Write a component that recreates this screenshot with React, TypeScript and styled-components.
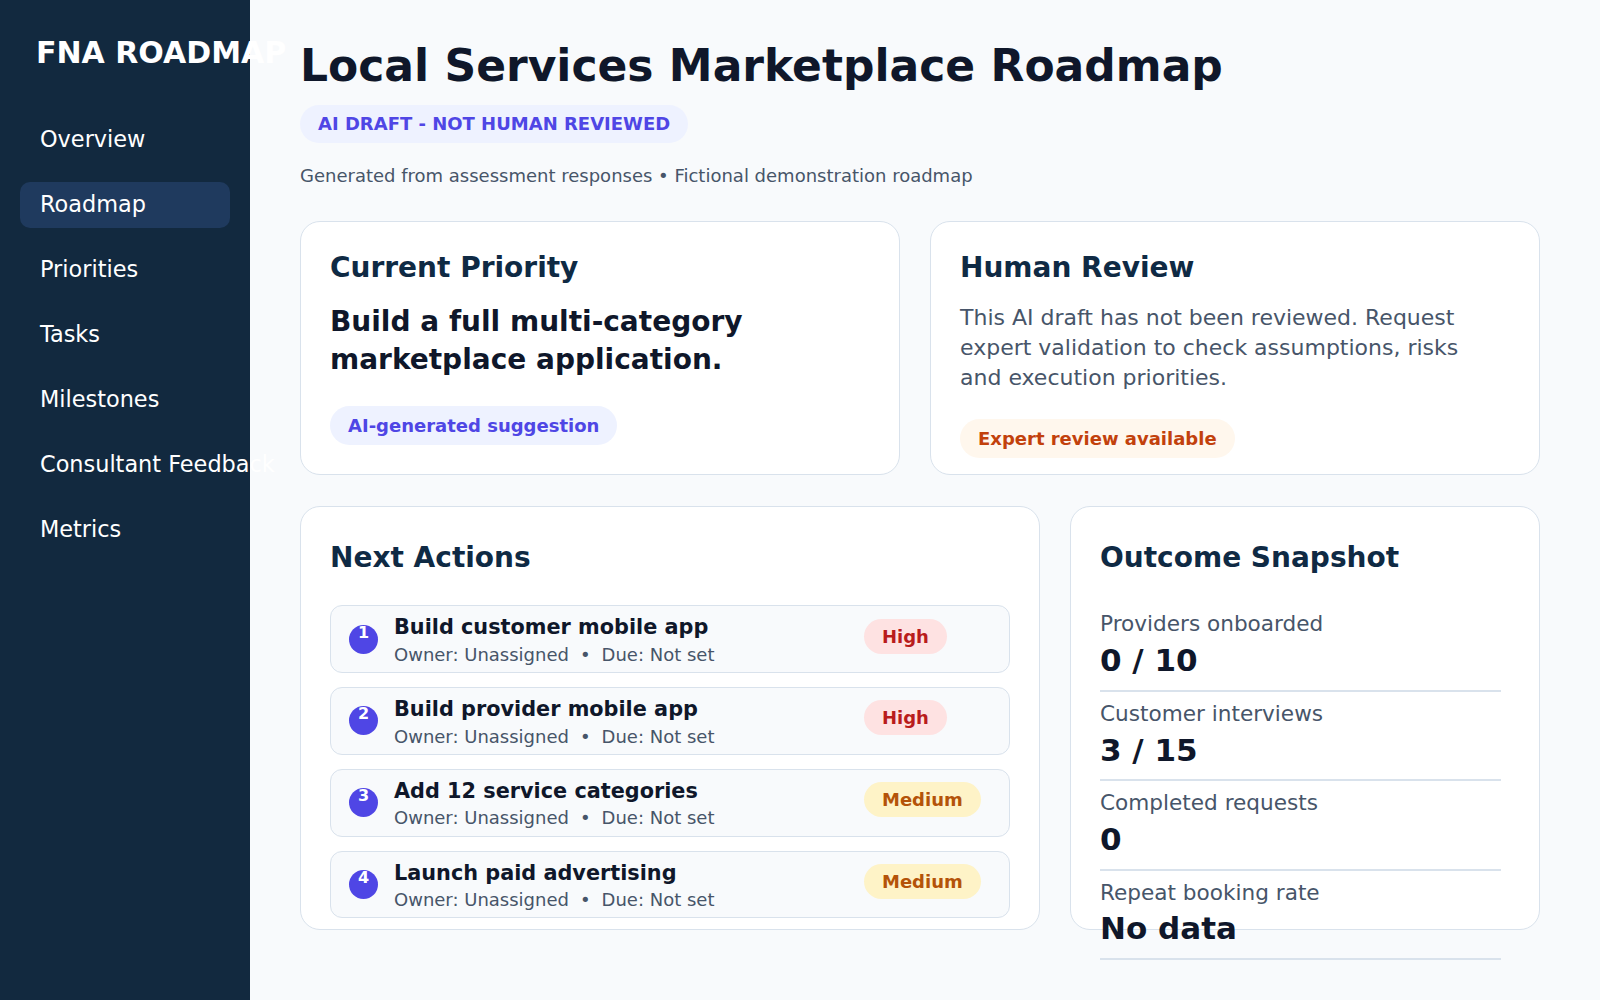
import React from "react";
import styled, { createGlobalStyle, css } from "styled-components";

const GlobalStyle = createGlobalStyle`
  html, body {
    margin: 0;
    padding: 0;
    background: #f8fafc;
    font-family: "DejaVu Sans", "Noto Sans", sans-serif;
  }
  * { box-sizing: border-box; }
`;

const Layout = styled.div`
  display: flex;
  min-height: 100vh;
`;

const Sidebar = styled.aside`
  flex: 0 0 250px;
  width: 250px;
  background: #12293f;
  padding: 35px 20px;
  display: flex;
  flex-direction: column;
`;

const Brand = styled.div`
  padding-left: 16px;
  font-size: 30px;
  font-weight: 700;
  color: #ffffff;
  white-space: nowrap;
  line-height: normal;
`;

const Nav = styled.nav`
  margin-top: 47px;
  display: flex;
  flex-direction: column;
  gap: 19px;
`;

const NavItem = styled.div<{ $active?: boolean }>`
  padding: 9px 20px 11px;
  font-size: 22.4px;
  line-height: 26px;
  color: #ffffff;
  white-space: nowrap;
  border-radius: 10px;
  ${(p) =>
    p.$active &&
    css`
      background: #1f3a5e;
    `}
`;

const Main = styled.main`
  flex: 1;
  padding: 40px 60px 40px 50px;
  display: flex;
  flex-direction: column;
`;

const Title = styled.h1`
  margin: 0;
  font-size: 44px;
  line-height: 1.2;
  font-weight: 700;
  color: #0f172a;
`;

const DraftBadge = styled.span`
  align-self: flex-start;
  margin-top: 12px;
  padding: 9px 18px;
  border-radius: 999px;
  background: #eef2ff;
  color: #4f46e5;
  font-size: 18px;
  line-height: 20px;
  font-weight: 700;
`;

const Subtitle = styled.p`
  margin: 22px 0 0;
  font-size: 18px;
  line-height: 21px;
  color: #475569;
`;

const TopGrid = styled.section`
  margin-top: 35px;
  display: grid;
  grid-template-columns: 600fr 610fr;
  gap: 30px;
`;

const BottomGrid = styled.section`
  margin-top: 31px;
  display: grid;
  grid-template-columns: 740fr 470fr;
  gap: 30px;
`;

const Card = styled.div<{ $height: number; $padTop: number }>`
  height: ${(p) => p.$height}px;
  background: #ffffff;
  border: 1px solid #d9e2ec;
  border-radius: 20px;
  padding: ${(p) => p.$padTop}px 29px 0;
  display: flex;
  flex-direction: column;
  align-items: stretch;
`;

const CardTitle = styled.h2<{ $gap: number }>`
  margin: 0 0 ${(p) => p.$gap}px;
  font-size: 28px;
  line-height: 1.2;
  font-weight: 700;
  color: #0f2a44;
`;

const PriorityText = styled.p`
  margin: 0 0 27px;
  font-size: 28px;
  line-height: 1.35;
  font-weight: 700;
  color: #0f172a;
`;

const ReviewText = styled.p`
  margin: 0 0 27px;
  max-width: 520px;
  font-size: 22px;
  line-height: 1.35;
  color: #475569;
`;

const Pill = styled.span<{ $tone: "indigo" | "orange" }>`
  align-self: flex-start;
  padding: 9px 18px;
  border-radius: 999px;
  font-size: 18px;
  line-height: 21px;
  font-weight: 700;
  ${(p) =>
    p.$tone === "indigo"
      ? css`
          background: #eef2ff;
          color: #4f46e5;
        `
      : css`
          background: #fff7ed;
          color: #c2410c;
        `}
`;

const ActionList = styled.div`
  display: flex;
  flex-direction: column;
  gap: 14px;
`;

const ActionItem = styled.div`
  display: grid;
  grid-template-columns: 29px 1fr 127px;
  column-gap: 16px;
  align-items: center;
  padding: 6px 18px;
  border: 1px solid #d9e2ec;
  border-radius: 12px;
  background: #f8fafc;
`;

const StepNumber = styled.span`
  width: 29px;
  height: 29px;
  border-radius: 50%;
  background: #4f46e5;
  color: #ffffff;
  font-size: 16px;
  line-height: 16px;
  font-weight: 700;
  text-align: center;
`;

const ActionBody = styled.div`
  display: flex;
  flex-direction: column;
  min-width: 0;
`;

const ActionTitle = styled.div`
  font-size: 20.8px;
  line-height: 30.4px;
  font-weight: 700;
  color: #0f172a;
`;

const ActionMeta = styled.div`
  font-size: 18px;
  line-height: 23.3px;
  color: #475569;
  white-space: nowrap;
`;

const Dot = styled.span`
  margin: 0 11px;
`;

const PriorityBadge = styled.span<{ $level: "High" | "Medium" }>`
  align-self: start;
  justify-self: start;
  margin-top: 6.4px;
  padding: 7px 18px;
  border-radius: 999px;
  font-size: 18px;
  line-height: 21px;
  font-weight: 700;
  ${(p) =>
    p.$level === "High"
      ? css`
          background: #fee2e2;
          color: #b91c1c;
        `
      : css`
          background: #fef3c7;
          color: #b45309;
        `}
`;

const MetricList = styled.div`
  max-width: 401px;
  display: flex;
  flex-direction: column;
`;

const MetricRow = styled.div`
  padding: 9px 0 10.3px;
  border-bottom: 2px solid #d9e2ec;
  display: flex;
  flex-direction: column;
  gap: 5px;
`;

const MetricLabel = styled.div`
  font-size: 21.6px;
  line-height: 1.2;
  color: #475569;
`;

const MetricValue = styled.div`
  font-size: 31px;
  line-height: 1.2;
  font-weight: 700;
  color: #0f172a;
`;

const navItems = [
  "Overview",
  "Roadmap",
  "Priorities",
  "Tasks",
  "Milestones",
  "Consultant Feedback",
  "Metrics",
];

const actions: { title: string; level: "High" | "Medium" }[] = [
  { title: "Build customer mobile app", level: "High" },
  { title: "Build provider mobile app", level: "High" },
  { title: "Add 12 service categories", level: "Medium" },
  { title: "Launch paid advertising", level: "Medium" },
];

const metrics = [
  { label: "Providers onboarded", value: "0 / 10" },
  { label: "Customer interviews", value: "3 / 15" },
  { label: "Completed requests", value: "0" },
  { label: "Repeat booking rate", value: "No data" },
];

export default function App() {
  return (
    <>
      <GlobalStyle />
      <Layout>
        <Sidebar>
          <Brand>FNA ROADMAP</Brand>
          <Nav>
            {navItems.map((item) => (
              <NavItem key={item} $active={item === "Roadmap"}>
                {item}
              </NavItem>
            ))}
          </Nav>
        </Sidebar>
        <Main>
          <Title>Local Services Marketplace Roadmap</Title>
          <DraftBadge>AI DRAFT - NOT HUMAN REVIEWED</DraftBadge>
          <Subtitle>
            Generated from assessment responses • Fictional demonstration roadmap
          </Subtitle>

          <TopGrid>
            <Card $height={254} $padTop={29}>
              <CardTitle $gap={19}>Current Priority</CardTitle>
              <PriorityText>
                Build a full multi-category marketplace application.
              </PriorityText>
              <Pill $tone="indigo">AI-generated suggestion</Pill>
            </Card>
            <Card $height={254} $padTop={29}>
              <CardTitle $gap={19}>Human Review</CardTitle>
              <ReviewText>
                This AI draft has not been reviewed. Request expert validation
                to check assumptions, risks and execution priorities.
              </ReviewText>
              <Pill $tone="orange">Expert review available</Pill>
            </Card>
          </TopGrid>

          <BottomGrid>
            <Card $height={424} $padTop={34}>
              <CardTitle $gap={31}>Next Actions</CardTitle>
              <ActionList>
                {actions.map((a, i) => (
                  <ActionItem key={a.title}>
                    <StepNumber>{i + 1}</StepNumber>
                    <ActionBody>
                      <ActionTitle>{a.title}</ActionTitle>
                      <ActionMeta>
                        Owner: Unassigned<Dot>•</Dot>Due: Not set
                      </ActionMeta>
                    </ActionBody>
                    <PriorityBadge $level={a.level}>{a.level}</PriorityBadge>
                  </ActionItem>
                ))}
              </ActionList>
            </Card>
            <Card $height={424} $padTop={34}>
              <CardTitle $gap={28}>Outcome Snapshot</CardTitle>
              <MetricList>
                {metrics.map((m) => (
                  <MetricRow key={m.label}>
                    <MetricLabel>{m.label}</MetricLabel>
                    <MetricValue>{m.value}</MetricValue>
                  </MetricRow>
                ))}
              </MetricList>
            </Card>
          </BottomGrid>
        </Main>
      </Layout>
    </>
  );
}
